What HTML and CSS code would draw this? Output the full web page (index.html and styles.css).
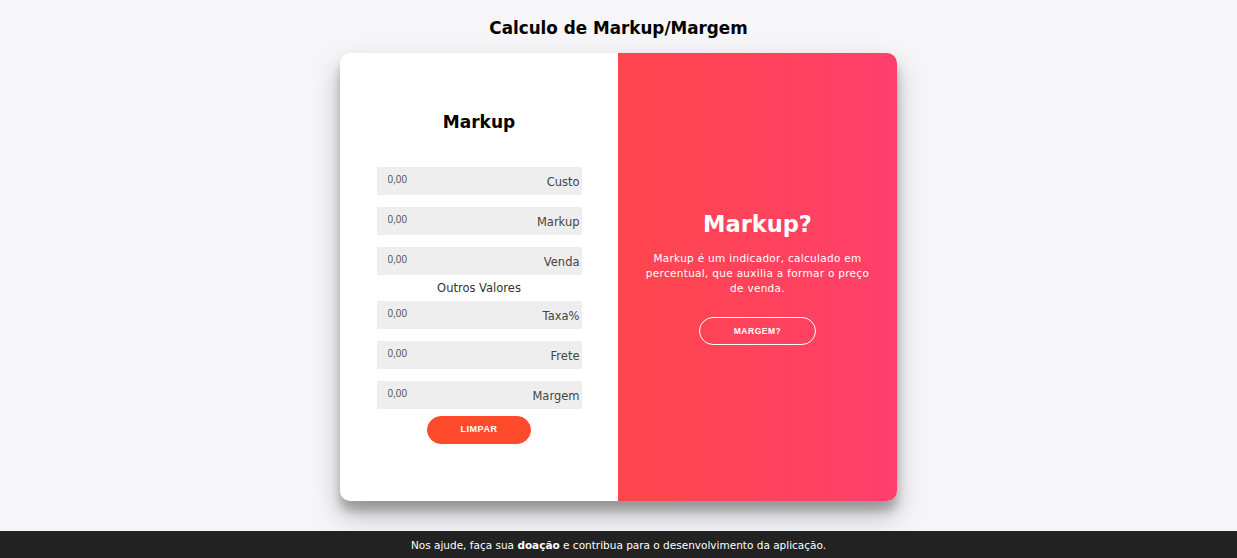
FILE: index.html
```html
<!DOCTYPE html>
<html lang="pt-BR">
<head>
<meta charset="utf-8">
<title>Calculo de Markup/Margem</title>
<link rel="stylesheet" href="styles.css">
</head>
<body>
<main class="page">
  <h2 class="page-title">Calculo de Markup/Margem</h2>
  <div class="card">
    <section class="form-panel">
      <h1 class="form-title">Markup</h1>
      <div class="field"><input class="field-input" placeholder="0,00"><span class="field-label">Custo</span></div>
      <div class="field"><input class="field-input" placeholder="0,00"><span class="field-label">Markup</span></div>
      <div class="field"><input class="field-input" placeholder="0,00"><span class="field-label">Venda</span></div>
      <span class="section-label">Outros Valores</span>
      <div class="field field-first"><input class="field-input" placeholder="0,00"><span class="field-label">Taxa%</span></div>
      <div class="field"><input class="field-input" placeholder="0,00"><span class="field-label">Frete</span></div>
      <div class="field"><input class="field-input" placeholder="0,00"><span class="field-label">Margem</span></div>
      <button class="btn-solid">LIMPAR</button>
    </section>
    <section class="info-panel">
      <h1 class="info-title">Markup?</h1>
      <p class="info-text">Markup é um indicador, calculado em percentual, que auxilia a formar o preço de venda.</p>
      <button class="btn-ghost">MARGEM?</button>
    </section>
  </div>
</main>
<footer class="footer">
  <p>Nos ajude, faça sua <strong>doação</strong> e contribua para o desenvolvimento da aplicação.</p>
</footer>
</body>
</html>
```
FILE: styles.css
```css
* { box-sizing: border-box; }
html, body { height: 100%; }
body {
  margin: 0;
  background: #f6f5f7;
  font-family: "DejaVu Sans", "Noto Sans", sans-serif;
  display: flex;
  flex-direction: column;
}
.page {
  flex: 1;
  display: flex;
  flex-direction: column;
  align-items: center;
}
.page-title {
  margin: 16px 0 0;
  height: 37px;
  font-size: 16.8px;
  font-weight: bold;
  color: #000;
  line-height: 24px;
}
.card {
  width: 557px;
  height: 448px;
  display: flex;
  background: #fff;
  border-radius: 10px;
  overflow: hidden;
  box-shadow: 0 14px 28px rgba(0,0,0,0.25), 0 10px 10px rgba(0,0,0,0.22);
}
.form-panel {
  flex: 0 0 278px;
  width: 278px;
  display: flex;
  flex-direction: column;
  align-items: center;
  justify-content: center;
  padding: 0;
}
.form-title {
  margin: 1px 0 29px;
  font-size: 17px;
  font-weight: bold;
  color: #000;
}
.field {
  width: 205px;
  height: 28px;
  background: #eee;
  display: flex;
  align-items: center;
  margin: 6px 0;
  flex-shrink: 0;
}
.field-first { margin-top: 6px; }
.field-input {
  flex: 1;
  min-width: 0;
  width: 0;
  border: none;
  background: transparent;
  outline: none;
  padding: 0 11px;
  height: 100%;
  font-family: "Liberation Sans", Arial, sans-serif;
  font-size: 10px;
  padding-bottom: 3px;
}
.field-input::placeholder { color: #555; }
.field-label {
  padding-right: 2px;
  padding-top: 2px;
  font-size: 11.5px;
  color: #444;
}
.section-label {
  font-size: 11.5px;
  color: #333;
  margin: 0;
  line-height: 14px;
}
.btn-solid {
  margin-top: 1px;
  width: 104px;
  height: 28px;
  border: 1px solid #ff4b2b;
  background: #ff4b2b;
  color: #fff;
  border-radius: 20px;
  font-family: "Liberation Sans", Arial, sans-serif;
  font-weight: bold;
  font-size: 9px;
  letter-spacing: 0.5px;
  padding: 0 0 2px;
}
.info-panel {
  flex: 1 1 0;
  min-width: 0;
  background: linear-gradient(to right, #ff464c, #ff3f6c);
  color: #fff;
  display: flex;
  flex-direction: column;
  align-items: center;
  justify-content: center;
  padding: 0;
  text-align: center;
}
.info-title {
  margin: 2px 0 0;
  font-size: 22.5px;
  font-weight: bold;
}
.info-text {
  margin: 14px 0 21px;
  font-size: 10.5px;
  line-height: 15px;
  letter-spacing: 0.3px;
  width: 230px;
}
.btn-ghost {
  width: 117px;
  height: 28px;
  border: 1px solid #fff;
  background: transparent;
  color: #fff;
  border-radius: 20px;
  font-family: "Liberation Sans", Arial, sans-serif;
  font-weight: bold;
  font-size: 8.5px;
  letter-spacing: 0.5px;
  padding: 0;
}
.footer {
  height: 27px;
  background: #222;
  color: #fff;
  display: flex;
  align-items: center;
  justify-content: center;
}
.footer p {
  margin: 0;
  font-size: 10.5px;
  letter-spacing: 0;
}
.footer strong { font-weight: bold; }
```
